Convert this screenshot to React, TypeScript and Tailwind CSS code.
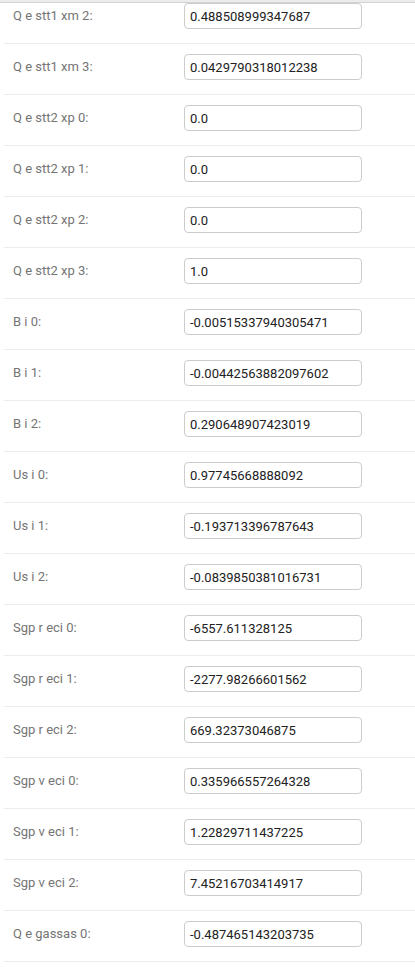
const rows: [string, string][] = [
  ["Q e stt1 xm 2:", "0.488508999347687"],
  ["Q e stt1 xm 3:", "0.0429790318012238"],
  ["Q e stt2 xp 0:", "0.0"],
  ["Q e stt2 xp 1:", "0.0"],
  ["Q e stt2 xp 2:", "0.0"],
  ["Q e stt2 xp 3:", "1.0"],
  ["B i 0:", "-0.00515337940305471"],
  ["B i 1:", "-0.00442563882097602"],
  ["B i 2:", "0.290648907423019"],
  ["Us i 0:", "0.97745668888092"],
  ["Us i 1:", "-0.193713396787643"],
  ["Us i 2:", "-0.0839850381016731"],
  ["Sgp r eci 0:", "-6557.611328125"],
  ["Sgp r eci 1:", "-2277.98266601562"],
  ["Sgp r eci 2:", "669.32373046875"],
  ["Sgp v eci 0:", "0.335966557264328"],
  ["Sgp v eci 1:", "1.22829711437225"],
  ["Sgp v eci 2:", "7.45216703414917"],
  ["Q e gassas 0:", "-0.487465143203735"],
]

function FieldRow({ label, value }: { label: string; value: string }) {
  return (
    <div className="ml-[4px] flex h-[51px] items-center border-b border-[#ececec] pb-[4px]">
      <label className="w-[180px] shrink-0 pl-[9px] text-[13px] text-[#757575]">{label}</label>
      <input
        readOnly
        value={value}
        className="h-[26px] w-[178px] rounded-[4px] border border-[#cccccc] bg-white px-[5px] text-[13px] text-[#222222] outline-none"
      />
    </div>
  )
}

export default function App() {
  return (
    <div className="relative h-[967px] overflow-hidden bg-white" style={{ fontFamily: "Roboto, 'Liberation Sans', sans-serif" }}>
      <div className="absolute left-0 right-0 top-0 z-10 h-[3px] border-b border-[#d2d2d2] bg-[#ececec]" />
      <div className="-mt-[7px]">
        {rows.map(([label, value]) => (
          <FieldRow key={label} label={label} value={value} />
        ))}
      </div>
    </div>
  )
}
